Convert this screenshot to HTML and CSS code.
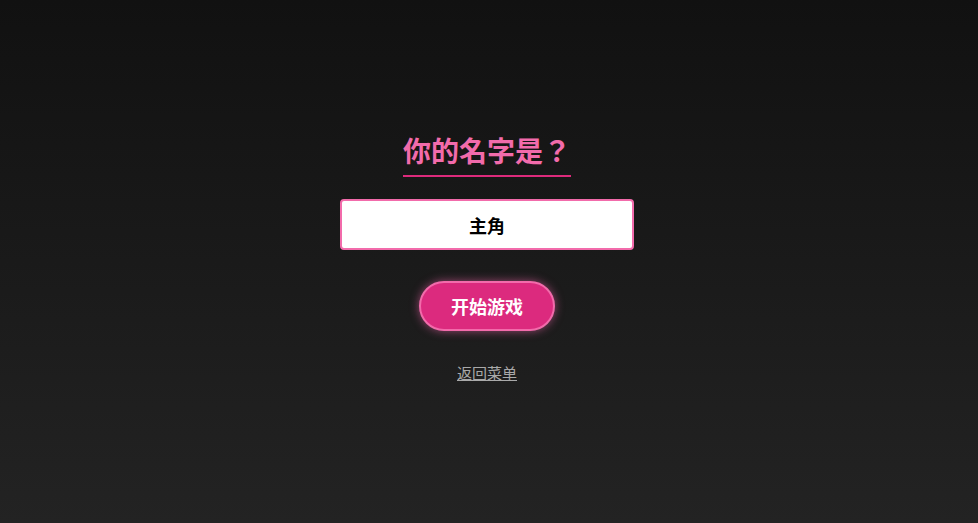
FILE: index.html
```html
<!DOCTYPE html>
<html>
<head>
<meta charset="utf-8">
<link rel="stylesheet" href="styles.css">
</head>
<body>
<main class="screen">
  <h1 class="title">你的名字是？</h1>
  <input class="name-input" type="text" value="主角">
  <button class="start-btn">开始游戏</button>
  <a class="back-link" href="#">返回菜单</a>
</main>
</body>
</html>
```
FILE: styles.css
```css
html, body {
  margin: 0;
  padding: 0;
  height: 100%;
}
body {
  background: linear-gradient(to bottom, #111111 0%, #232323 100%);
  font-family: "Noto Sans CJK JP", "Noto Sans CJK TC", "Noto Sans", sans-serif;
  overflow: hidden;
}
.screen {
  height: 100%;
  display: flex;
  flex-direction: column;
  align-items: center;
  padding-top: 127px;
  padding-right: 4px;
  box-sizing: border-box;
}
.title {
  margin: 0;
  font-size: 28px;
  font-weight: 700;
  color: #f26bab;
  line-height: 40px;
  padding-top: 3px;
  padding-bottom: 5px;
  border-bottom: 2px solid #dd2a7b;
  text-spacing-trim: space-all;
}
.name-input {
  margin-top: 22px;
  width: 294px;
  height: 51px;
  box-sizing: border-box;
  border: 2px solid #f26bab;
  border-radius: 4px;
  background: #ffffff;
  text-align: center;
  font-family: inherit;
  font-size: 18px;
  font-weight: 700;
  color: #000;
  outline: none;
}
.start-btn {
  margin-top: 31px;
  width: 136px;
  height: 50px;
  box-sizing: border-box;
  border: 2px solid #f26bab;
  border-radius: 25px;
  background: #dc2a7e;
  color: #fff;
  font-family: inherit;
  font-size: 18px;
  font-weight: 700;
  box-shadow: 0 0 10px rgba(255, 105, 180, 0.55);
  cursor: pointer;
}
.back-link {
  margin-top: 31px;
  color: #a9a9a9;
  font-size: 15px;
  line-height: 22px;
  text-decoration: underline;
}
```
